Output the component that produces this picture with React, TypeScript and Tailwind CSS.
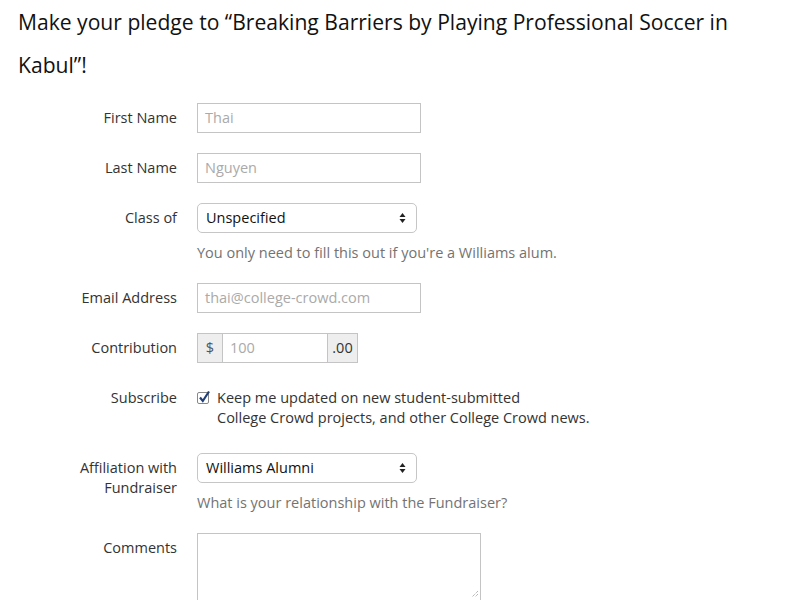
import React from "react";

const labelCls = "w-[159px] shrink-0 text-right text-[14.5px] leading-[20px] text-[#333] pt-[5px]";
const inputCls = "h-[30px] w-[224px] border border-[#c4c4c4] bg-white pl-[7px] text-[14.5px] leading-[28px] text-[#aaa]";

function SelectBox({ value }: { value: string }) {
  return (
    <div className="flex h-[30px] w-[220px] items-center justify-between rounded-[5px] border border-[#c6c6c6] bg-white pl-[8px] pr-[10px] text-[14.5px] text-[#111]">
      <span>{value}</span>
      <svg width="7" height="12" viewBox="0 0 7 12">
        <path d="M3.5 1 L6.5 5 L0.5 5 Z" fill="#222" />
        <path d="M3.5 11 L6.5 7 L0.5 7 Z" fill="#222" />
      </svg>
    </div>
  );
}

export default function App() {
  return (
    <div className="min-h-[600px] bg-white pl-[18px]" style={{ fontFamily: '"Open Sans", sans-serif' }}>
      <h1 className="max-w-[745px] text-[21.1px] leading-[43px] text-[#111] font-normal">
        Make your pledge to “Breaking Barriers by Playing Professional Soccer in Kabul”!
      </h1>
      <div className="mt-[17px] flex flex-col">
        <div className="flex gap-[20px]">
          <div className={labelCls}>First Name</div>
          <div className={inputCls}>Thai</div>
        </div>
        <div className="mt-[20px] flex gap-[20px]">
          <div className={labelCls}>Last Name</div>
          <div className={inputCls}>Nguyen</div>
        </div>
        <div className="mt-[20px] flex gap-[20px]">
          <div className={labelCls}>Class of</div>
          <div>
            <SelectBox value="Unspecified" />
            <div className="mt-[10px] text-[14.5px] leading-[20px] text-[#737373]">
              You only need to fill this out if you're a Williams alum.
            </div>
          </div>
        </div>
        <div className="mt-[20px] flex gap-[20px]">
          <div className={labelCls}>Email Address</div>
          <div className={inputCls}>thai@college-crowd.com</div>
        </div>
        <div className="mt-[20px] flex gap-[20px]">
          <div className={labelCls}>Contribution</div>
          <div className="flex h-[30px] text-[14.5px]">
            <div className="flex w-[26px] items-center justify-center border border-[#c4c4c4] bg-[#eee] text-[#555]">$</div>
            <div className="w-[104px] border-y border-[#c4c4c4] bg-white pl-[7px] leading-[28px] text-[#aaa]">100</div>
            <div className="flex w-[31px] items-center justify-center border border-[#c4c4c4] bg-[#eee] text-[#333]">.00</div>
          </div>
        </div>
        <div className="mt-[20px] flex gap-[20px]">
          <div className={labelCls}>Subscribe</div>
          <div className="flex pt-[5px] text-[14.5px] leading-[20px] text-[#333]">
            <div className="mr-[8px] mt-[4px] h-[12px] w-[12px] shrink-0 relative rounded-[2px] border border-[#888] bg-white">
              <svg className="absolute -top-[3px] left-0" width="13" height="14" viewBox="0 0 13 14">
                <path d="M2 7.5 L4.8 11 L11 1.5" stroke="#1f3f7a" strokeWidth="2.2" fill="none" />
              </svg>
            </div>
            <div>
              Keep me updated on new student-submitted
              <br />
              College Crowd projects, and other College Crowd news.
            </div>
          </div>
        </div>
        <div className="mt-[25px] flex gap-[20px]">
          <div className={labelCls}>
            Affiliation with
            <br />
            Fundraiser
          </div>
          <div>
            <SelectBox value="Williams Alumni" />
            <div className="mt-[10px] text-[14.5px] leading-[20px] text-[#737373]">
              What is your relationship with the Fundraiser?
            </div>
          </div>
        </div>
        <div className="mt-[20px] flex gap-[20px]">
          <div className={labelCls}>Comments</div>
          <div className="relative h-[69px] w-[284px] border border-[#c4c4c4] bg-white">
            <svg className="absolute right-[1px] bottom-[3px]" width="8" height="8" viewBox="0 0 8 8">
              <path d="M7 1 L1 7 M7 4 L4 7" stroke="#999" strokeWidth="1" strokeDasharray="1 1" />
            </svg>
          </div>
        </div>
      </div>
    </div>
  );
}
